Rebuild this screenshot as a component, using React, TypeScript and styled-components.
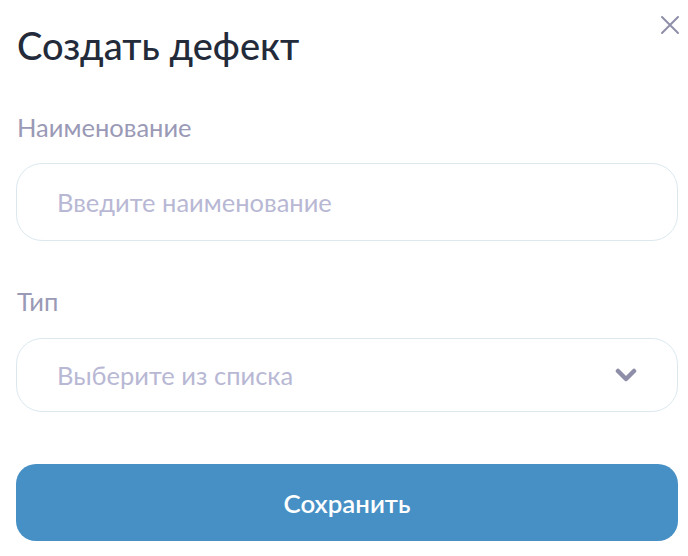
import { createGlobalStyle } from "styled-components";
import styled from "styled-components";

const GlobalStyle = createGlobalStyle`
  html, body {
    margin: 0;
    padding: 0;
    background: #ffffff;
  }
  body {
    font-family: Lato, "Noto Sans", sans-serif;
  }
`;

const Modal = styled.div`
  position: relative;
  width: 688px;
  height: 556px;
  box-sizing: border-box;
  padding: 22px 10px 0 16px;
  display: flex;
  flex-direction: column;
`;

const Title = styled.h1`
  margin: 0 0 0 1px;
  font-size: 38px;
  line-height: 46px;
  font-weight: 500;
  color: #232b3a;
`;

const CloseButton = styled.button`
  position: absolute;
  top: 13px;
  right: 6px;
  width: 24px;
  height: 24px;
  padding: 0;
  border: none;
  background: none;
  cursor: pointer;
  color: #8e8ea9;
  display: flex;
  align-items: center;
  justify-content: center;
`;

const Field = styled.div<{ $top: number; $gap: number }>`
  margin-top: ${(p) => p.$top}px;
  display: flex;
  flex-direction: column;
  gap: ${(p) => p.$gap}px;
`;

const Label = styled.label`
  margin-left: 1px;
  font-size: 25.5px;
  line-height: 31px;
  color: #9a9ab6;
`;

const Box = styled.div<{ $height: number }>`
  box-sizing: border-box;
  height: ${(p) => p.$height}px;
  border: 1px solid #dbe9ef;
  border-radius: 26px;
  padding: 0 40px;
  display: flex;
  align-items: center;
  justify-content: space-between;
  font-size: 25.5px;
  color: #b8b8d4;
`;

const Chevron = styled.svg`
  flex-shrink: 0;
`;

const SaveButton = styled.button`
  margin-top: 52px;
  height: 77px;
  border: none;
  border-radius: 20px;
  background: #4790c5;
  color: #ffffff;
  font-family: Lato, "Noto Sans", sans-serif;
  font-size: 25.8px;
  font-weight: 600;
  cursor: pointer;
`;

export default function App() {
  return (
    <>
      <GlobalStyle />
      <Modal>
        <CloseButton aria-label="Закрыть">
          <svg width="20" height="20" viewBox="0 0 20 20" fill="none">
            <path d="M2 2L18 18M18 2L2 18" stroke="currentColor" strokeWidth="2" strokeLinecap="round" />
          </svg>
        </CloseButton>
        <Title>Создать дефект</Title>
        <Field $top={44} $gap={20}>
          <Label>Наименование</Label>
          <Box $height={78}>Введите наименование</Box>
        </Field>
        <Field $top={45} $gap={21}>
          <Label>Тип</Label>
          <Box $height={74}>
            Выберите из списка
            <Chevron width="22" height="14" viewBox="0 0 22 14" fill="none">
              <path d="M3 3L11 11L19 3" stroke="#8e8ea9" strokeWidth="4.5" strokeLinecap="round" strokeLinejoin="round" />
            </Chevron>
          </Box>
        </Field>
        <SaveButton>Сохранить</SaveButton>
      </Modal>
    </>
  );
}
